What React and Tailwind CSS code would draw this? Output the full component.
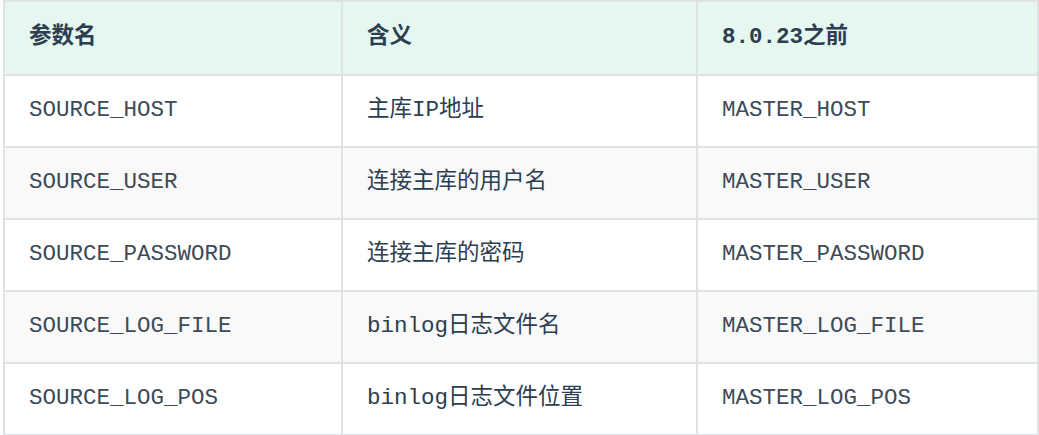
const rows = [
  ["SOURCE_HOST", "主库IP地址", "MASTER_HOST"],
  ["SOURCE_USER", "连接主库的用户名", "MASTER_USER"],
  ["SOURCE_PASSWORD", "连接主库的密码", "MASTER_PASSWORD"],
  ["SOURCE_LOG_FILE", "binlog日志文件名", "MASTER_LOG_FILE"],
  ["SOURCE_LOG_POS", "binlog日志文件位置", "MASTER_LOG_POS"],
];

const font = {
  fontFamily: '"Liberation Mono", "Noto Sans CJK SC", monospace',
};

function Cell({ children, last, bottom, className = "" }) {
  return (
    <div
      className={
        "flex items-center pl-6 border-[#dfe2e5] " +
        (last ? "" : "border-r-2 ") +
        (bottom ? "" : "border-b-2 ") +
        className
      }
    >
      {children}
    </div>
  );
}

export default function App() {
  return (
    <div className="bg-white w-[1039px] h-[435px]">
      <div
        className="ml-[3px] w-[1036px] border-2 border-[#dfe2e5] grid grid-cols-[338px_355px_339px] text-[22.5px] text-[#2c3e50]"
        style={font}
      >
        <Cell className="h-[74px] bg-[#e6f7ef] font-bold">参数名</Cell>
        <Cell className="h-[74px] bg-[#e6f7ef] font-bold">含义</Cell>
        <Cell last className="h-[74px] bg-[#e6f7ef] font-bold">8.0.23之前</Cell>
        {rows.map((r, i) => {
          const bottom = i === rows.length - 1;
          const bg = i % 2 === 1 ? "bg-[#f9f9f9]" : "bg-white";
          const h = bottom ? "h-[70px]" : "h-[72px]";
          return [
            <Cell key={i + "a"} bottom={bottom} className={`${h} ${bg} text-[#3d4a57]`}>
              {r[0]}
            </Cell>,
            <Cell key={i + "b"} bottom={bottom} className={`${h} ${bg} text-[#2c3e50]`}>
              {r[1]}
            </Cell>,
            <Cell key={i + "c"} last bottom={bottom} className={`${h} ${bg} text-[#3d4a57]`}>
              {r[2]}
            </Cell>,
          ];
        })}
      </div>
    </div>
  );
}
